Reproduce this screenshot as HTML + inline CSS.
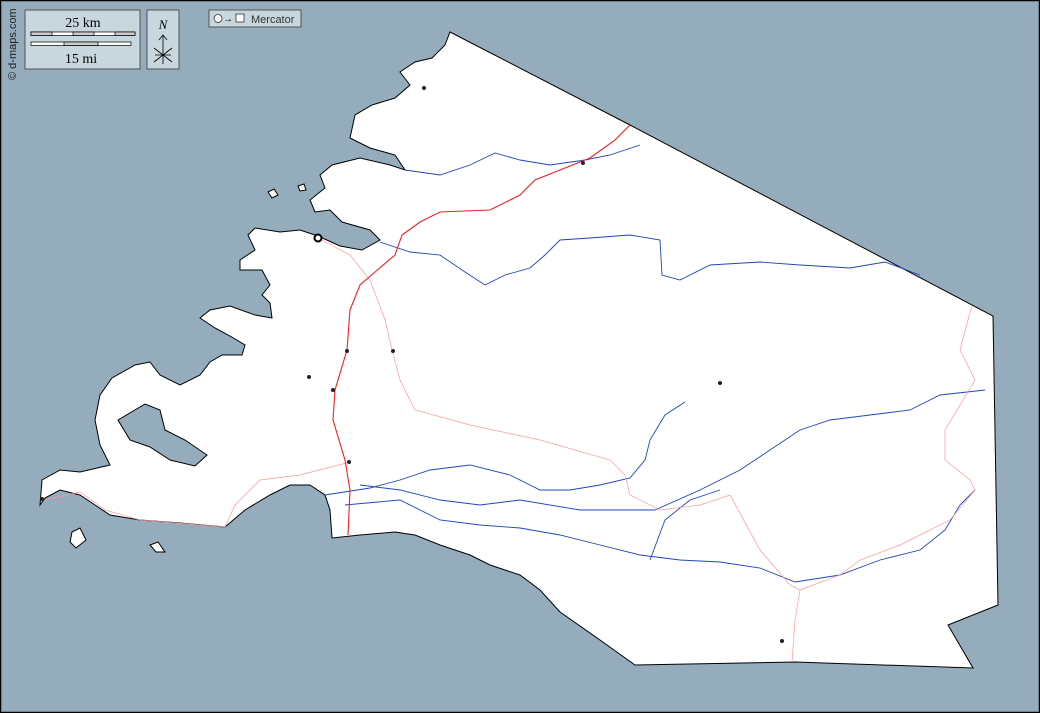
<!DOCTYPE html>
<html><head><style>
html,body{margin:0;padding:0}
body{background:#94acbc;width:1040px;height:713px;overflow:hidden;font-family:"Liberation Serif",serif}
svg{display:block}
</style></head><body>
<svg width="1040" height="713" viewBox="0 0 1040 713" xmlns="http://www.w3.org/2000/svg">
<rect x="0.5" y="0.5" width="1039" height="712" fill="#94acbc" stroke="#000" stroke-width="1.5"/>
<path d="M450,32 L630,125 L993,316 L998,605 L948,625 L973,668 L795,662 L635,665 L600,640 L560,612 L540,590 L520,575 L490,565 L470,555 L440,545 L415,535 L395,532 L360,535 L332,538 L330,510 L325,495 L310,485 L290,485 L270,495 L245,510 L225,527 L180,523 L140,520 L110,515 L95,505 L80,495 L60,490 L45,498 L40,505 L42,480 L60,470 L80,472 L110,465 L100,445 L95,420 L100,395 L112,378 L135,365 L150,362 L160,375 L180,385 L200,375 L210,362 L222,355 L242,355 L245,345 L230,336 L215,328 L200,318 L210,310 L230,306 L255,315 L272,318 L270,303 L262,295 L270,285 L262,270 L240,270 L240,260 L255,250 L248,235 L255,228 L280,232 L300,230 L318,236 L340,246 L362,250 L380,240 L370,230 L342,222 L330,210 L315,212 L310,200 L325,188 L320,175 L332,165 L360,158 L390,165 L405,170 L395,155 L370,148 L350,138 L355,115 L372,105 L395,98 L410,85 L400,72 L415,62 L432,58 L445,45 Z" fill="#fff" stroke="#000" stroke-width="1"/>
<path d="M118,420 L145,404 L160,410 L165,430 L185,440 L207,455 L195,466 L170,460 L150,447 L130,440 Z" fill="#94acbc" stroke="#000" stroke-width="1"/>
<path d="M72,532 L80,528 L86,540 L76,548 L70,542 Z M150,545 L158,542 L165,552 L156,552 Z M268,192 l6,-3 l4,6 l-6,3 Z M298,186 l6,-2 l2,6 l-6,1 Z" fill="#fff" stroke="#000" stroke-width="1"/>
<g fill="none" stroke="#2244bb" stroke-width="0.9">
<path d="M405,170 L440,175 L470,165 L495,153 L520,160 L550,165 L585,160 L610,155 L640,145"/>
<path d="M380,242 L410,252 L440,255 L465,272 L485,285 L505,275 L530,268 L545,255 L560,240 L590,238 L630,235 L660,240 L662,275 L680,280 L710,265 L760,262 L800,265 L850,268 L885,262 L920,275"/>
<path d="M325,495 L370,488 L400,480 L430,470 L470,465 L510,475 L540,490 L570,490 L600,485 L630,478 L645,460 L650,440 L665,415 L685,402"/>
<path d="M345,505 L400,500 L440,520 L480,525 L520,528 L560,535 L600,545 L640,555 L680,560 L720,562 L760,568 L795,582 L840,575 L880,560 L920,550 L945,530 L960,505 L975,490"/>
<path d="M360,485 L400,490 L440,500 L480,505 L520,500 L580,510 L620,510 L655,510 L700,490 L740,470 L770,450 L800,430 L830,420 L870,415 L910,410 L940,395 L985,390"/>
<path d="M650,560 L665,520 L690,500 L720,490"/>
</g>
<g fill="none" stroke="#ff9999" stroke-width="0.7">
<path d="M318,238 L350,255 L370,280 L385,320 L392,350 L400,380 L415,410 L470,425 L540,440 L610,460 L625,475 L630,495 L660,510 L700,505 L730,495 L760,550 L790,585 L800,590 L795,620 L792,662"/>
<path d="M350,462 L300,475 L260,480 L235,505 L225,527 L140,520 L105,510 L80,492 L45,500"/>
<path d="M972,305 L960,350 L975,380 L945,430 L945,460 L970,480 L975,490 L950,520 L900,545 L860,560 L840,575 L800,590"/>
</g>
<path d="M630,125 L615,140 L590,158 L560,170 L535,180 L520,195 L490,210 L440,212 L420,222 L402,235 L395,255 L375,272 L360,285 L350,310 L347,350 L335,390 L333,420 L345,460 L350,490 L348,535" fill="none" stroke="#ee2222" stroke-width="1.1"/>
<g fill="#222">
<circle cx="424" cy="88" r="2"/><circle cx="583" cy="163" r="2"/><circle cx="347" cy="351" r="2"/><circle cx="393" cy="351" r="2"/><circle cx="309" cy="377" r="2"/><circle cx="333" cy="390" r="2"/><circle cx="720" cy="383" r="2"/><circle cx="349" cy="462" r="2"/><circle cx="42" cy="499" r="2"/><circle cx="782" cy="641" r="2"/>
</g>
<circle cx="318" cy="238" r="3.5" fill="#fff" stroke="#000" stroke-width="2"/>
<rect x="25" y="10" width="115" height="59" fill="#c8d6de" stroke="#555"/>
<text x="83" y="27" font-size="14" text-anchor="middle" font-family="Liberation Serif">25 km</text>
<rect x="31" y="32" width="104" height="3.5" fill="#fff" stroke="#000" stroke-width="0.7"/>
<rect x="31" y="42" width="100" height="3.5" fill="#fff" stroke="#000" stroke-width="0.7"/>
<rect x="31" y="32" width="21" height="3.5" fill="#ccc" stroke="#000" stroke-width="0.7"/>
<rect x="73" y="32" width="21" height="3.5" fill="#ccc" stroke="#000" stroke-width="0.7"/>
<rect x="115" y="32" width="20" height="3.5" fill="#ccc" stroke="#000" stroke-width="0.7"/>
<rect x="64" y="42" width="34" height="3.5" fill="#ccc" stroke="#000" stroke-width="0.7"/>
<text x="81" y="63" font-size="14" text-anchor="middle" font-family="Liberation Serif">15 mi</text>
<rect x="147" y="10" width="32" height="59" fill="#c8d6de" stroke="#555"/>
<text x="163" y="29" font-size="13" font-style="italic" text-anchor="middle">N</text>
<path d="M163,36 V64 M159,40 L163,35 L167,40 M154,48 L172,62 M172,48 L154,62 M155,55 H171" stroke="#000" fill="none" stroke-width="0.8"/>
<rect x="209" y="10" width="92" height="17" fill="#c8d6de" stroke="#555"/>
<circle cx="218" cy="18.5" r="4" fill="#fff" stroke="#333" stroke-width="0.8"/>
<text x="223" y="22" font-size="10" font-family="Liberation Sans">→</text>
<rect x="236" y="14" width="8" height="8" fill="#fff" stroke="#333" stroke-width="0.8"/>
<text x="251" y="23" font-size="11" fill="#333" font-family="Liberation Sans">Mercator</text>
<text transform="translate(16,80) rotate(-90)" font-size="11" fill="#222" font-family="Liberation Sans">© d-maps.com</text>
</svg>
</body></html>
